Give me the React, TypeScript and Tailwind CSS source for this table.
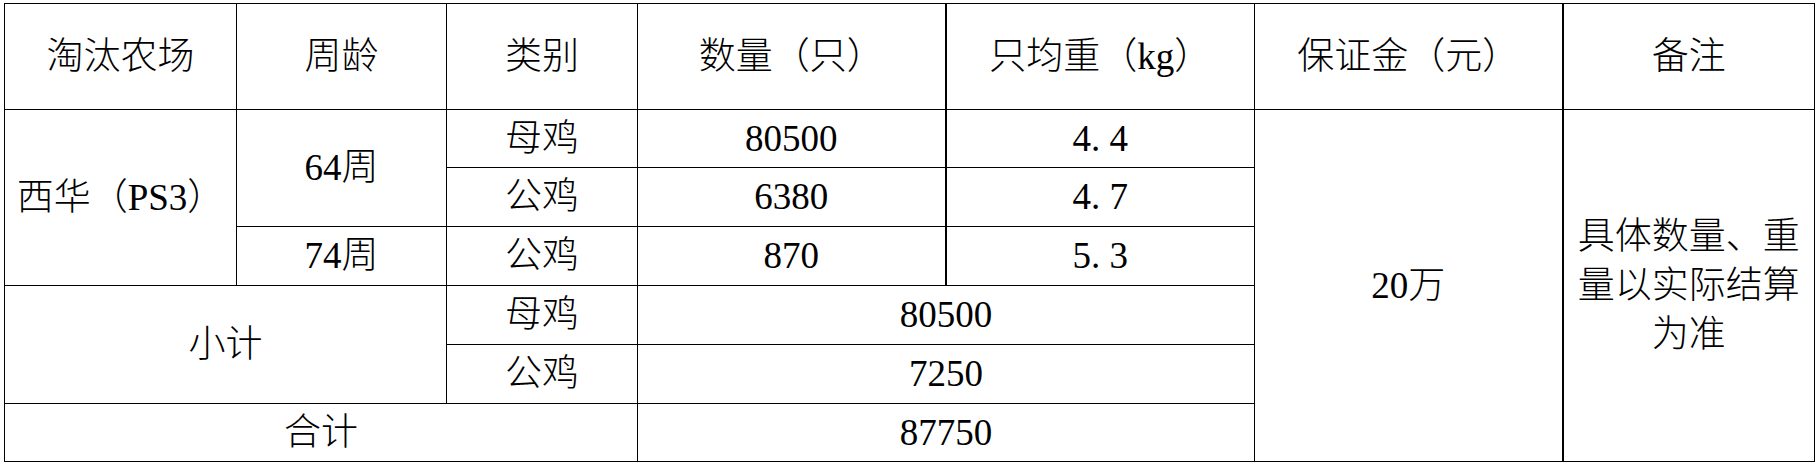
const cell = "border border-black text-center align-middle p-0 font-light";

function Dot({ value }: { value: string }) {
  // SimSun style: the stop takes a half-em slot
  const [a, b] = value.split(".");
  return (
    <span>
      {a}
      <span className="inline-block w-[0.5em] text-left">.</span>
      {b}
    </span>
  );
}

function Num({ children }: { children: React.ReactNode }) {
  return <span className="font-['Liberation_Serif',serif] font-normal">{children}</span>;
}

export default function App() {
  return (
    <div className="w-[1818px] h-[467px] bg-white overflow-hidden">
      <table className="ml-[4px] mt-[3px] w-[1810px] table-fixed border-collapse text-black text-[37px] leading-[44px] font-['Liberation_Serif','Noto_Sans_CJK_SC',serif]">
        <colgroup>
          <col className="w-[232px]" />
          <col className="w-[210px]" />
          <col className="w-[191px]" />
          <col className="w-[308px]" />
          <col className="w-[309px]" />
          <col className="w-[308px]" />
          <col className="w-[252px]" />
        </colgroup>
        <tbody>
          <tr className="h-[106px]">
            <td className={cell}>淘汰农场</td>
            <td className={cell}>周龄</td>
            <td className={cell}>类别</td>
            <td className={`${cell} border-r-2`}>数量（只）</td>
            <td className={cell}>
              只均重（<Num>kg</Num>）
            </td>
            <td className={`${cell} border-r-2`}>保证金（元）</td>
            <td className={cell}>备注</td>
          </tr>
          <tr className="h-[58px]">
            <td className={cell} rowSpan={3}>
              西华（<Num>PS3</Num>）
            </td>
            <td className={cell} rowSpan={2}>
              <Num>64</Num>周
            </td>
            <td className={cell}>母鸡</td>
            <td className={`${cell} border-r-2`}>
              <Num>80500</Num>
            </td>
            <td className={cell}>
              <Num>
                <Dot value="4.4" />
              </Num>
            </td>
            <td className={`${cell} border-r-2`} rowSpan={6}>
              <Num>20</Num>万
            </td>
            <td className={`${cell} px-[12px] leading-[49px]`} rowSpan={6}>
              具体数量、重量以实际结算为准
            </td>
          </tr>
          <tr className="h-[59px]">
            <td className={cell}>公鸡</td>
            <td className={`${cell} border-r-2`}>
              <Num>6380</Num>
            </td>
            <td className={cell}>
              <Num>
                <Dot value="4.7" />
              </Num>
            </td>
          </tr>
          <tr className="h-[59px]">
            <td className={cell}>
              <Num>74</Num>周
            </td>
            <td className={cell}>公鸡</td>
            <td className={`${cell} border-r-2`}>
              <Num>870</Num>
            </td>
            <td className={cell}>
              <Num>
                <Dot value="5.3" />
              </Num>
            </td>
          </tr>
          <tr className="h-[59px]">
            <td className={cell} colSpan={2} rowSpan={2}>
              小计
            </td>
            <td className={cell}>母鸡</td>
            <td className={cell} colSpan={2}>
              <Num>80500</Num>
            </td>
          </tr>
          <tr className="h-[59px]">
            <td className={cell}>公鸡</td>
            <td className={cell} colSpan={2}>
              <Num>7250</Num>
            </td>
          </tr>
          <tr className="h-[58px]">
            <td className={cell} colSpan={3}>
              合计
            </td>
            <td className={cell} colSpan={2}>
              <Num>87750</Num>
            </td>
          </tr>
        </tbody>
      </table>
    </div>
  );
}
